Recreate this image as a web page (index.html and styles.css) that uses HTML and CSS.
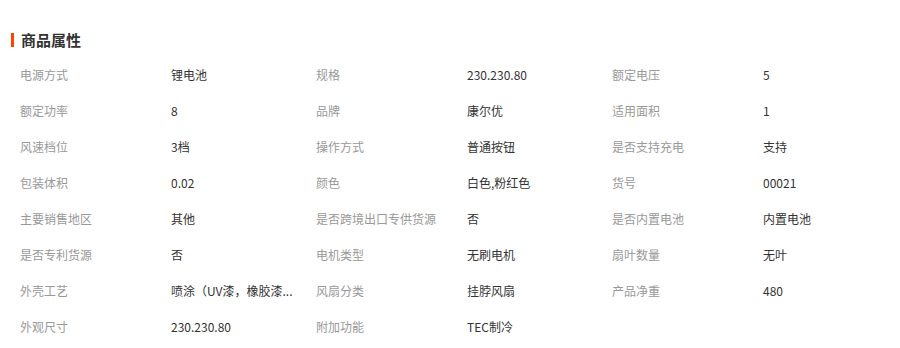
FILE: index.html
```html
<!DOCTYPE html>
<html lang="zh-CN">
<head>
<meta charset="utf-8">
<title>商品属性</title>
<link rel="stylesheet" href="styles.css">
</head>
<body>
<section class="panel">
  <h2 class="title"><span class="bar"></span>商品属性</h2>
  <div class="attrs">
    <div class="k">电源方式</div><div class="v">锂电池</div>
    <div class="k">规格</div><div class="v">230.230.80</div>
    <div class="k">额定电压</div><div class="v">5</div>

    <div class="k">额定功率</div><div class="v">8</div>
    <div class="k">品牌</div><div class="v">康尔优</div>
    <div class="k">适用面积</div><div class="v">1</div>

    <div class="k">风速档位</div><div class="v">3档</div>
    <div class="k">操作方式</div><div class="v">普通按钮</div>
    <div class="k">是否支持充电</div><div class="v">支持</div>

    <div class="k">包装体积</div><div class="v">0.02</div>
    <div class="k">颜色</div><div class="v">白色,粉红色</div>
    <div class="k">货号</div><div class="v">00021</div>

    <div class="k">主要销售地区</div><div class="v">其他</div>
    <div class="k">是否跨境出口专供货源</div><div class="v">否</div>
    <div class="k">是否内置电池</div><div class="v">内置电池</div>

    <div class="k">是否专利货源</div><div class="v">否</div>
    <div class="k">电机类型</div><div class="v">无刷电机</div>
    <div class="k">扇叶数量</div><div class="v">无叶</div>

    <div class="k">外壳工艺</div><div class="v" title="喷涂（UV漆，橡胶漆等）">喷涂（UV漆，橡胶漆...</div>
    <div class="k">风扇分类</div><div class="v">挂脖风扇</div>
    <div class="k">产品净重</div><div class="v">480</div>

    <div class="k">外观尺寸</div><div class="v">230.230.80</div>
    <div class="k">附加功能</div><div class="v">TEC制冷</div>
  </div>
</section>
</body>
</html>
```
FILE: styles.css
```css
html, body {
  margin: 0;
  padding: 0;
  background: #fff;
}
body {
  font-family: "Microsoft YaHei", "Noto Sans CJK SC", "Liberation Sans", sans-serif;
  color: #333;
}
.panel {
  padding: 30px 0 0 11px;
}
.title {
  display: flex;
  align-items: center;
  gap: 7px;
  margin: 0;
  height: 20px;
  line-height: 20px;
  font-size: 15px;
  font-weight: bold;
  color: #333;
}
.bar {
  display: inline-block;
  width: 3px;
  height: 14px;
  background: #ff4400;
}
.attrs {
  display: grid;
  grid-template-columns: 151px 145px 151px 145px 151px 145px;
  grid-auto-rows: 36px;
  margin: 7px 0 0 9px;
  font-size: 12px;
  line-height: 36px;
}
.k {
  color: #999;
  white-space: nowrap;
}
.v {
  color: #333;
  white-space: nowrap;
}
```
